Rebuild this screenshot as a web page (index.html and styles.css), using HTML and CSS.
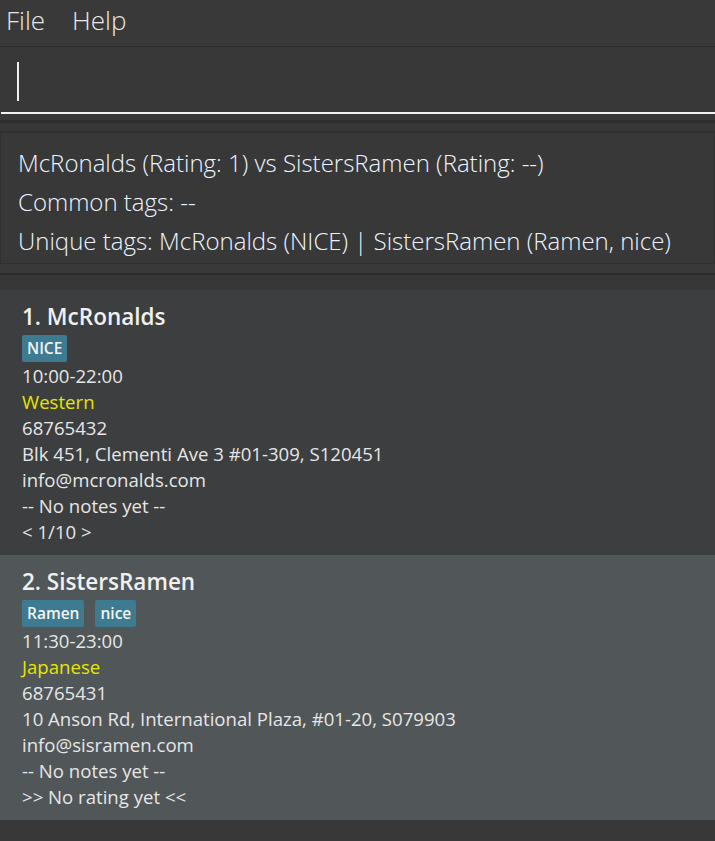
FILE: index.html
```html
<!DOCTYPE html>
<html>
<head>
<meta charset="utf-8">
<link rel="stylesheet" href="styles.css">
</head>
<body>
<div class="app">
  <div class="menubar">
    <span class="menu-item">File</span>
    <span class="menu-item">Help</span>
  </div>
  <div class="command-box">
    <span class="caret"></span>
  </div>
  <div class="sep"></div>
  <div class="result">
    <div class="result-line">McRonalds (Rating: 1) vs SistersRamen (Rating: --)</div>
    <div class="result-line">Common tags: --</div>
    <div class="result-line">Unique tags: McRonalds (NICE) | SistersRamen (Ramen, nice)</div>
  </div>
  <div class="sep2"></div>
  <div class="list">
    <div class="card card-odd">
      <div class="title">1. McRonalds</div>
      <div class="tags"><span class="tag">NICE</span></div>
      <div class="line">10:00-22:00</div>
      <div class="line cuisine">Western</div>
      <div class="line">68765432</div>
      <div class="line">Blk 451, Clementi Ave 3 #01-309, S120451</div>
      <div class="line">info@mcronalds.com</div>
      <div class="line">-- No notes yet --</div>
      <div class="line">&lt; 1/10 &gt;</div>
    </div>
    <div class="card card-even">
      <div class="title">2. SistersRamen</div>
      <div class="tags"><span class="tag">Ramen</span><span class="tag">nice</span></div>
      <div class="line">11:30-23:00</div>
      <div class="line cuisine">Japanese</div>
      <div class="line">68765431</div>
      <div class="line">10 Anson Rd, International Plaza, #01-20, S079903</div>
      <div class="line">info@sisramen.com</div>
      <div class="line">-- No notes yet --</div>
      <div class="line">&gt;&gt; No rating yet &lt;&lt;</div>
    </div>
  </div>
</div>
</body>
</html>
```

FILE: styles.css
```css
* { box-sizing: border-box; }
html, body { margin: 0; padding: 0; }
body {
  background: #383838;
  font-family: "Open Sans", "Noto Sans", sans-serif;
  width: 715px;
  height: 841px;
  overflow: hidden;
}
.app { display: flex; flex-direction: column; }
.menubar {
  height: 47px;
  display: flex;
  align-items: center;
  gap: 27px;
  padding-left: 6px;
  border-bottom: 1px solid #2b2b2b;
  background: #393939;
}
.menu-item {
  color: #e8e8e8;
  font-size: 26px;
  font-weight: 300;
  padding-bottom: 6px;
}
.command-box {
  height: 67px;
  padding-left: 16px;
  display: flex;
  align-items: center;
  border-bottom: 2px solid #f2f2f2;
  margin-left: 1px;
  background: #383838;
}
.caret {
  width: 2px;
  height: 39px;
  background: #f0f0f0;
  margin-top: 4px;
}
.sep {
  height: 18px;
  border-bottom: 1px solid #2f2f2f;
  background: linear-gradient(#383838 0 6px, #2e2e2e 6px 9px, #373737 9px);
}
.result {
  height: 132px;
  border: 1px solid #2f2f2f;
  background: #383838;
  padding: 10px 0 0 17px;
}
.result-line {
  color: #eef4ff;
  font-size: 24px;
  font-weight: 300;
  line-height: 39px;
  white-space: nowrap;
}
.sep2 {
  height: 26px;
  background: linear-gradient(#393939 0 9px, #2c2c2c 9px 11px, #373737 11px);
}
.list { display: flex; flex-direction: column; }
.card {
  height: 265px;
  padding: 11px 0 0 22px;
  color: #e6e6e6;
}
.card-odd { background: #3c3e3f; }
.card-even { background: #515658; }
.title {
  font-size: 22.5px;
  font-weight: 600;
  color: #f0f0f0;
  line-height: 32px;
}
.tags { display: flex; gap: 11px; height: 28px; margin: 2px 0 0; }
.tag {
  background: #3e7b91;
  color: #f4f4f4;
  font-weight: 600;
  font-size: 15.5px;
  line-height: 27px;
  height: 27px;
  padding: 0 5px;
  border-radius: 2px;
}
.line {
  font-size: 18.6px;
  line-height: 26px;
  white-space: nowrap;
}
.cuisine { color: #e6e600; }
```
